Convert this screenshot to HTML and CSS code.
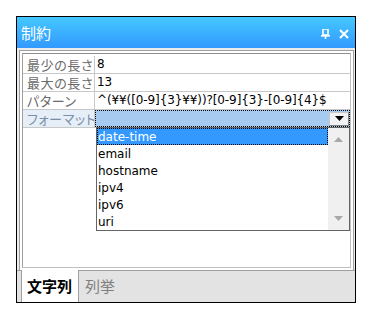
FILE: index.html
```html
<!DOCTYPE html>
<html>
<head>
<meta charset="utf-8">
<link rel="stylesheet" href="styles.css">
</head>
<body>
<div class="window">
  <div class="titlebar">
    <span class="title">制約</span>
    <span class="title-icons">
      <svg class="pin" width="9" height="10" viewBox="0 0 9 10">
        <rect x="2" y="0" width="5" height="6" fill="none" stroke="#fff" stroke-width="1.6"/>
        <rect x="0" y="6" width="9" height="1.6" fill="#fff"/>
        <rect x="3.7" y="7" width="1.6" height="3" fill="#fff"/>
      </svg>
      <svg class="close" width="10" height="10" viewBox="0 0 10 10">
        <path d="M1 1 L9 9 M9 1 L1 9" stroke="#fff" stroke-width="2" fill="none"/>
      </svg>
    </span>
  </div>
  <div class="content">
    <div class="panel">
      <div class="grid">
        <div class="row"><div class="label">最少の長さ</div><div class="value">8</div></div>
        <div class="row"><div class="label">最大の長さ</div><div class="value">13</div></div>
        <div class="row"><div class="label">パターン</div><div class="value">^(¥¥([0-9]{3}¥¥))?[0-9]{3}-[0-9]{4}$</div></div>
        <div class="row active"><div class="label">フォーマット</div><div class="value combo"><span class="combo-btn"><svg width="9" height="5" viewBox="0 0 9 5"><path d="M0 0 H9 L4.5 5 Z" fill="#000"/></svg></span></div></div>
        <div class="dropdown">
          <div class="items">
            <div class="item selected">date-time</div>
            <div class="item">email</div>
            <div class="item">hostname</div>
            <div class="item">ipv4</div>
            <div class="item">ipv6</div>
            <div class="item">uri</div>
          </div>
          <div class="scrollbar">
            <svg width="9" height="5" viewBox="0 0 9 5"><path d="M0 5 H9 L4.5 0 Z" fill="#a8a8a8"/></svg>
            <svg width="9" height="5" viewBox="0 0 9 5"><path d="M0 0 H9 L4.5 5 Z" fill="#a8a8a8"/></svg>
          </div>
        </div>
      </div>
    </div>
  </div>
  <div class="tabs">
    <div class="tab selected">文字列</div>
    <div class="tab">列挙</div>
  </div>
</div>
</body>
</html>
```

FILE: styles.css
```css
html, body {
  margin: 0;
  padding: 0;
  background: #fff;
}
body {
  font-family: "Noto Sans CJK JP", "Noto Sans", sans-serif;
}
.window {
  margin: 16px 0 0 16px;
  width: 338px;
  height: 285px;
  border: 1px solid #000;
  display: flex;
  flex-direction: column;
}
.titlebar {
  height: 31px;
  flex: none;
  background: linear-gradient(#44c8ff, #3399ff);
  display: flex;
  align-items: center;
  justify-content: space-between;
  padding: 0 6px 0 4px;
  color: #fff;
}
.title {
  font-size: 15px;
  line-height: 15px;
  margin-top: -1px;
}
.title-icons {
  display: flex;
  align-items: center;
  gap: 9px;
  margin-top: 2px;
}
.title-icons svg { display: block; }
.content {
  flex: 1;
  background: #ececec;
  padding: 2px 1px 0 2px;
  display: flex;
  min-height: 0;
}
.panel {
  flex: 1;
  border: 1px solid #a0a0a0;
  border-bottom: none;
  background: #fff;
  padding: 2px 2px 2px 2px;
  display: flex;
}
.grid {
  flex: 1;
  position: relative;
  border: 1px solid #c0c0c0;
  border-top-color: #909090;
  border-left-color: #a0a0a0;
  padding-top: 2px;
}
.row {
  display: flex;
  height: 17px;
  border-bottom: 1px solid #c8c8c8;
  font-size: 13px;
  line-height: 17px;
}
.label {
  width: 67px;
  flex: none;
  padding-left: 4px;
  border-right: 1px solid #c8c8c8;
  color: #6a6a6a;
  overflow: hidden;
  white-space: nowrap;
  font-feature-settings: "palt";
  letter-spacing: 0.6px;
}
.value {
  flex: 1;
  padding-left: 2px;
  color: #000;
  white-space: nowrap;
  font-family: "DejaVu Sans", "Noto Sans CJK JP", sans-serif;
  font-size: 12px;
  letter-spacing: -0.1px;
}
.row.active .label {
  background: #e6eef8;
  color: #7a8ea8;
}
.combo {
  background: #a6caf0;
  outline: 1px dotted #000;
  outline-offset: -1px;
  display: flex;
  justify-content: flex-end;
  align-items: center;
  padding-right: 1px;
}
.combo-btn {
  width: 18px;
  height: 12px;
  background: #f2f2f2;
  border: 1px solid #c8c8c8;
  border-right-color: #808080;
  border-bottom-color: #808080;
  display: flex;
  align-items: center;
  justify-content: center;
}
.combo-btn svg { display: block; }
.dropdown {
  position: absolute;
  left: 73px;
  top: 73px;
  width: 252px;
  height: 102px;
  border: 1px solid #646464;
  background: #fff;
  display: flex;
}
.items {
  flex: 1;
  font-family: "DejaVu Sans", "Noto Sans CJK JP", sans-serif;
  font-size: 12px;
}
.item {
  height: 16px;
  line-height: 16px;
  padding: 1px 0 0 1px;
  color: #000;
}
.item.selected {
  background: #3399ff;
  color: #fff;
  outline: 1px dotted #000;
  outline-offset: -1px;
}
.scrollbar {
  width: 21px;
  flex: none;
  background: #f0f0f0;
  display: flex;
  flex-direction: column;
  align-items: center;
  justify-content: space-between;
  padding: 9px 0 9px;
}
.scrollbar svg { display: block; }
.tabs {
  height: 31px;
  flex: none;
  background: #e3e3e3;
  border-top: 1px solid #a0a0a0;
  display: flex;
  padding-left: 4px;
}
.tab {
  font-size: 15px;
  line-height: 30px;
  padding: 0 6px;
  color: #808080;
}
.tab.selected {
  background: #fff;
  color: #000;
  font-weight: bold;
  border-left: 1px solid #a0a0a0;
  border-right: 1px solid #a0a0a0;
  margin-top: -1px;
  line-height: 31px;
  padding: 0 6px 0 5px;
}
```
